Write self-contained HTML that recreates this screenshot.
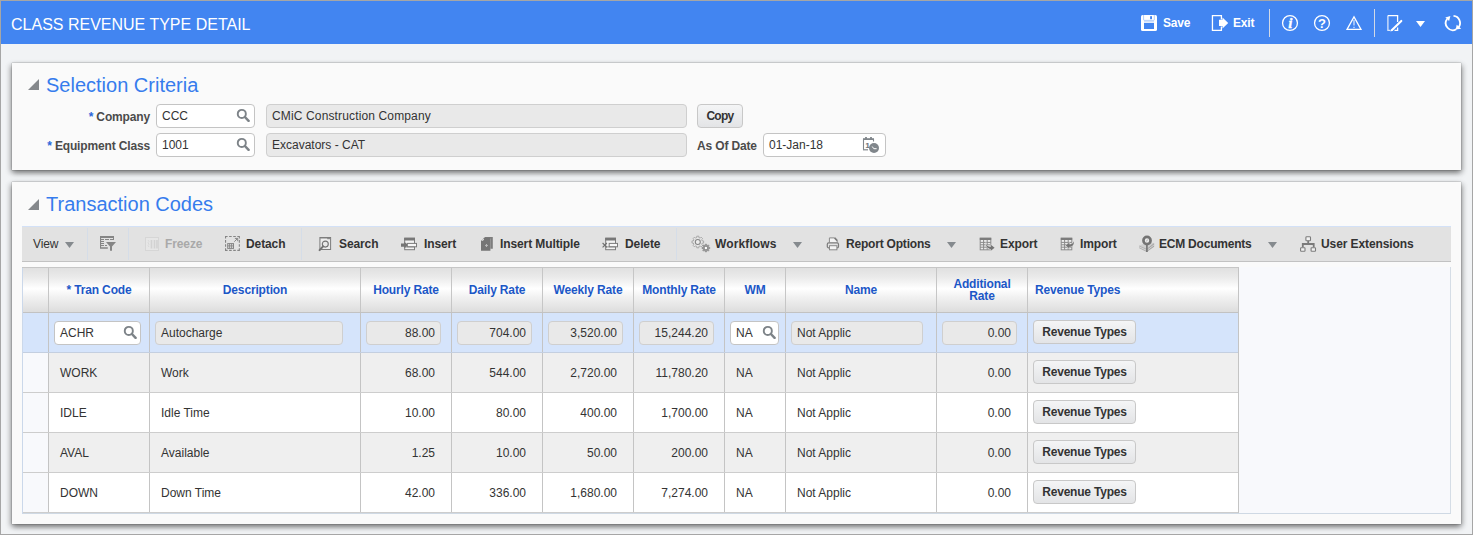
<!DOCTYPE html>
<html><head><meta charset="utf-8"><title>Class Revenue Type Detail</title>
<style>
*{box-sizing:border-box;margin:0;padding:0}
html,body{width:1473px;height:535px;overflow:hidden}
body{position:relative;background:#f1f3f5;font-family:"Liberation Sans",Arial,sans-serif;font-size:12px;color:#333}
.abs{position:absolute}
#frame{position:absolute;left:0;top:0;width:1473px;height:535px;border:1px solid #a6a6a6;z-index:50;pointer-events:none}
#hdr{position:absolute;left:1px;top:1px;width:1471px;height:43px;background:#4285f1}
#hdr .title{position:absolute;left:10px;top:14px;font-size:16px;line-height:20px;color:#fff;white-space:nowrap}
.hb{position:absolute;color:#fff;font-weight:bold;font-size:12px;line-height:14px;white-space:nowrap;letter-spacing:-0.2px}
.vsep{position:absolute;width:1px;background:#d2d9e6;top:8px;height:28px}
.panel{position:absolute;left:12px;width:1449px;background:#fafafa;box-shadow:0 0 1px rgba(0,0,0,.5),0 3px 6px rgba(0,0,0,.34),-2px 2px 5px rgba(0,0,0,.16),2px 2px 5px rgba(0,0,0,.16)}
.ptitle{position:absolute;left:47px;font-size:20px;line-height:24px;color:#367ced;white-space:nowrap}
.tri{position:absolute;left:28px;width:0;height:0;border-left:11px solid transparent;border-bottom:11px solid #85888c}
.lbl{position:absolute;letter-spacing:-0.15px;font-weight:bold;color:#4b4b4b;white-space:nowrap;line-height:14px;text-align:right}
.lbl b{color:#2b66d9}
.inp{position:absolute;height:24px;border:1px solid #c4c4c4;border-radius:4px;background:#fff;line-height:22px;padding-left:5px;white-space:nowrap;color:#333}
.ro{background:#e9e9e9;border-color:#cfcfcf}
.btn{position:absolute;height:24px;border:1px solid #c8c8c8;border-radius:4px;background:linear-gradient(#f4f5f6,#e3e4e6);font-weight:bold;color:#333;line-height:23px;text-align:center;white-space:nowrap;letter-spacing:-0.2px}
.mag{position:absolute;right:4px;top:3px;width:14px;height:14px}
#tb{position:absolute;left:22px;top:226px;width:1429px;height:36px;background:#e2e2e2;border-top:1px solid #d3e1f7;border-bottom:1px solid #c2c2c2}
.ti{position:absolute;top:10px;font-weight:bold;line-height:14px;color:#333;white-space:nowrap;letter-spacing:-0.1px}
.tsep{position:absolute;top:1px;width:1px;height:32px;background:#d5dde8}
.ico{position:absolute}
.dd{position:absolute;width:9px;height:6px;background:#858a8e;clip-path:polygon(0 0,100% 0,50% 100%)}
#tw{position:absolute;left:22px;top:267px;width:1429px;height:247px;background:#f8f9fc;border-right:1px solid #d5dde6;border-bottom:1px solid #cfd9e4}
#grid{position:absolute;left:0;top:0;width:1217px;height:246px;border-top:1px solid #c6c6c6;border-right:1px solid #c4c4c4;border-bottom:1px solid #c9c9c9}
.hrow{position:absolute;left:0;top:0;width:1216px;height:45px;background:linear-gradient(#e0e0e0 0%,#ebebeb 22%,#ffffff 47%,#f1f1f1 66%,#dddddd 100%);border-bottom:1px solid #c2c2c2}
.hc{position:absolute;top:0;height:44px;border-left:1px solid #c6c6c6;color:#1c57c7;font-weight:bold;text-align:center;line-height:12px;display:flex;align-items:center;justify-content:center;letter-spacing:-0.15px}
.row{position:absolute;left:0;width:1216px;height:40px;border-bottom:1px solid #cdcdcd}
.row.sel{background:#d5e4fb;border-bottom-color:#c4cfe0}
.row.odd{background:#efefef}
.row.even{background:#fff}
.rh{position:absolute;left:0;top:0;width:26px;height:39px;background:#f8f9fc}
.row.sel .rh{background:#d5e4fb}
.c{position:absolute;top:0;height:39px;border-left:1px solid #c4c4c4;line-height:41px;white-space:nowrap;color:#333}
.c.l{padding-left:11px}
.c.r{text-align:right;padding-right:16px}
.c .inp{top:8px}
.c .mag{right:3px}
.c .btn{top:7px;left:5px;width:103px}
</style></head><body>
<div id="hdr">
 <div class="title">CLASS REVENUE TYPE DETAIL</div>
 <div class="hb" style="left:1162px;top:15px">Save</div>
 <div class="hb" style="left:1232px;top:15px">Exit</div>

 <svg class="ico" style="left:1140px;top:14px" width="16" height="16" viewBox="0 0 16 16"><rect x="0" y="0" width="16" height="16" rx="1.6" fill="#fff"/><rect x="3" y="8" width="10" height="6" fill="#4285f1"/><rect x="3" y="6" width="10" height="1.6" fill="#cfe0fc"/><path d="M2.6 0V4.5Q2.6 5.4 3.5 5.4H12.4Q13.3 5.4 13.3 4.5V0" stroke="#4285f1" stroke-opacity=".5" stroke-width=".8" fill="none"/><rect x="9.1" y="1.2" width="1.9" height="3" fill="#4285f1"/></svg>
 <svg class="ico" style="left:1210px;top:14px" width="18" height="16" viewBox="0 0 18 16"><path d="M10.4 4.6V0.65H1.45V15.35H10.4V11.4" stroke="#fff" stroke-width="1.3" fill="none"/><path d="M8 4.8H11.5V2.4L17.2 7.9L11.5 13.4V11H8Z" fill="#fff"/></svg>
 <svg class="ico" style="left:1280px;top:13px" width="18" height="18" viewBox="0 0 18 18"><circle cx="9" cy="9" r="7.45" stroke="#fff" stroke-width="1.3" fill="none"/><text x="9.3" y="14" text-anchor="middle" font-family="Liberation Serif,serif" font-style="italic" font-weight="bold" font-size="15" fill="#fff" stroke="#fff" stroke-width=".35">i</text></svg>
 <svg class="ico" style="left:1312px;top:13px" width="18" height="18" viewBox="0 0 18 18"><circle cx="9" cy="9" r="7.45" stroke="#fff" stroke-width="1.3" fill="none"/><text x="9.1" y="13.7" text-anchor="middle" font-family="Liberation Sans,sans-serif" font-weight="bold" font-size="13" fill="#fff">?</text></svg>
 <svg class="ico" style="left:1344px;top:14px" width="18" height="16" viewBox="0 0 18 16"><path d="M9 1.9L16 14.4H2Z" stroke="#fff" stroke-width="1.25" fill="none" stroke-linejoin="miter"/><path d="M9 5V10.6M9 11.8V13" stroke="#fff" stroke-opacity=".75" stroke-width="1.3"/></svg>
 <svg class="ico" style="left:1385px;top:13px" width="18" height="18" viewBox="0 0 18 18"><path d="M11.6 8V1.6H1.9" stroke="#fff" stroke-width="1.3" fill="none"/><path d="M1.9 1.6V16.4H4.5" stroke="#fff" stroke-opacity=".8" stroke-width="1.3" fill="none"/><path d="M8.5 16.4H11.6V13.5" stroke="#fff" stroke-width="1.3" fill="none"/><path d="M15.3 6.9L6 15.9" stroke="#fff" stroke-width="2.1" stroke-linecap="round"/><path d="M4.3 17.4L5.4 15.2L7 16.7Z" fill="#fff"/></svg>
 <svg class="ico" style="left:1415px;top:20px" width="9" height="6" viewBox="0 0 9 6"><path d="M0 0H9L4.5 6Z" fill="#fff"/></svg>
 <svg class="ico" style="left:1443px;top:13px" width="19" height="18" viewBox="0 0 19 18"><path d="M9.5 1.93A7.1 7.1 0 0 1 14.6 13.3" stroke="#fff" stroke-width="1.8" fill="none"/><path d="M12.3 15.25A7.1 7.1 0 0 1 3.1 4.9" stroke="#fff" stroke-width="1.8" fill="none"/><path d="M1.3 3.4L6.4 1.9L5.1 7Z" fill="#fff"/><path d="M12.7 10.8L17.2 14.7L11.7 15.6Z" fill="#fff"/></svg>
 <div class="vsep" style="left:1268px"></div>
 <div class="vsep" style="left:1373px"></div>
</div>

<div class="panel" style="top:63px;height:107px"><div style="position:absolute;left:0;top:-1px;width:100%;height:0">
 <div class="tri" style="top:17px;left:16px"></div>
 <div class="ptitle" style="left:34px;top:11px">Selection Criteria</div>
 <div class="lbl" style="right:1311px;top:48px"><b>*</b> Company</div>
 <div class="lbl" style="right:1311px;top:77px"><b>*</b> Equipment Class</div>
 <div class="inp" style="left:144px;top:42px;width:99px">CCC<svg class="mag" width="14" height="14" viewBox="0 0 14 14"><circle cx="5.8" cy="5.9" r="4.05" fill="none" stroke="#7d8388" stroke-width="1.9"/><path d="M8.9 9L12.6 12.8" stroke="#7d8388" stroke-width="2.5" stroke-linecap="round"/></svg></div>
 <div class="inp" style="left:144px;top:71px;width:99px">1001<svg class="mag" width="14" height="14" viewBox="0 0 14 14"><circle cx="5.8" cy="5.9" r="4.05" fill="none" stroke="#7d8388" stroke-width="1.9"/><path d="M8.9 9L12.6 12.8" stroke="#7d8388" stroke-width="2.5" stroke-linecap="round"/></svg></div>
 <div class="inp ro" style="left:254px;top:42px;width:421px;letter-spacing:.14px">CMiC Construction Company</div>
 <div class="inp ro" style="left:254px;top:71px;width:421px">Excavators - CAT</div>
 <div class="btn" style="left:685px;top:42px;width:46px;letter-spacing:-0.7px">Copy</div>
 <div class="lbl" style="left:685px;top:77px">As Of Date</div>
 <div class="inp" style="left:751px;top:71px;width:123px">01-Jan-18<svg class="ico" style="right:5px;top:3px" width="18" height="18" viewBox="0 0.5 18 18"><path d="M1.5 13.2V3H11.5V5" stroke="#80868b" stroke-width="1.1" fill="none"/><path d="M1 2.6H12" stroke="#80868b" stroke-width="1.8"/><path d="M4 .6V3M9 .6V3" stroke="#80868b" stroke-width="1.8"/><path d="M1 13.3H6" stroke="#80868b" stroke-width="1.2"/><text x="3.4" y="11.2" font-family="Liberation Sans,sans-serif" font-size="7.5" font-weight="bold" fill="#6f757a" stroke="#6f757a" stroke-width=".2">1</text><circle cx="12" cy="11.5" r="5" fill="#80868b"/><path d="M10.2 10L11.8 12.2H14.6" stroke="#fff" stroke-width="1" fill="none"/></svg></div>
</div></div>

<div class="panel" style="top:182px;height:342px">
 <div class="tri" style="top:17px;left:16px"></div>
 <div class="ptitle" style="left:34px;top:10px">Transaction Codes</div>
</div>

<div id="tb">
 <svg class="ico" style="left:78px;top:9px" width="17" height="15" viewBox="0 0 17 15"><path d="M0 0H14V3.6H13V2H1.1V11.3H7.8V12.8H0Z" fill="#858585"/><path d="M1 3.5H4M5 3.5H9M10 3.5H14M1 5.5H4M1 7.5H4M1 9.5H4M5 9.5H7" stroke="#858585" stroke-width="1"/><path d="M6 6.1H16L12 10.6V14.7H10V10.6Z" fill="#858585"/></svg>
 <svg class="ico" style="left:123px;top:10px" width="14" height="14" viewBox="0 0 14 14"><rect x=".5" y=".5" width="13" height="13" fill="#e6e6e6" stroke="#d6d6d6"/><path d="M6.5 3V11.5M9.5 3V11.5M12 3V11.5" stroke="#d2d2d2" stroke-width="1.6"/><path d="M3 3l1 1.4l-1 1.4l1 1.4l-1 1.4l1 1.4" stroke="#d6d6d6" stroke-width=".8" fill="none"/></svg>
 <svg class="ico" style="left:203px;top:9px" width="15" height="15" viewBox="0 0 15 15"><path d="M0 .55H14.9M0 14.35H14.9M.55 0V14.9M14.35 0V14.9" fill="none" stroke="#858585" stroke-width="1.1" stroke-dasharray="2.6 1.5"/><rect x="2.7" y="7.6" width="5.8" height="4.8" fill="none" stroke="#858585" stroke-width="1"/><path d="M4.6 7.6V12.4M6.6 7.6V12.4M2.7 9.9H8.5" stroke="#858585" stroke-width=".9"/><path d="M9.3 5.7L12.4 2.6M9.9 2.4H12.7V5.2" stroke="#858585" stroke-width="1" fill="none"/></svg>
 <svg class="ico" style="left:296px;top:9px" width="15" height="16" viewBox="0 0 15 16"><rect x="1.9" y="1.5" width="10.7" height="12" fill="#ececec" stroke="#7c7c7c" stroke-width="1"/><path d="M2.4 2.5H12.2" stroke="#8a8a8a" stroke-width="1.4"/><path d="M3 3.1H9.2" stroke="#fff" stroke-width="1"/><circle cx="7.3" cy="8.1" r="3" fill="#e9e9e9" stroke="#747474" stroke-width="1.1"/><path d="M5.1 10.4L1.6 14.1" stroke="#747474" stroke-width="2.1" stroke-linecap="round"/></svg>
 <svg class="ico" style="left:378px;top:10px" width="18" height="14" viewBox="0 0 18 14"><rect x="4.7" y="1.3" width="9.8" height="11.4" fill="#f2f2f2" stroke="#7c7c7c" stroke-width="1"/><rect x="4.2" y=".7" width="10.8" height="2.8" fill="#787878"/><rect x="7.2" y="6.4" width="9.3" height="3.4" fill="#f6f6f6" stroke="#7c7c7c" stroke-width="1"/><path d="M4.7 9.9H14.5" stroke="#7c7c7c" stroke-width=".8"/><path d="M1 6.4H4.3V4.8L8 8.1L4.3 11.4V9.8H1Z" fill="#757575"/></svg>
 <svg class="ico" style="left:458px;top:9px" width="14" height="16" viewBox="0 0 14 16"><path d="M5 1H12.8V12.8H10.4V2.4H4Z" fill="#7d7d7d"/><path d="M4 1.8H10.4V14.8H1V5Z" fill="#757575"/><path d="M1.8 4.3L3.4 2.6L4 3.6L2.8 4.9Z" fill="#e8e8e8"/><path d="M6.5 8.1V10.9M5.1 9.5H7.9" stroke="#b9b9b9" stroke-width="1.1"/></svg>
 <svg class="ico" style="left:579px;top:10px" width="18" height="14" viewBox="0 0 18 14"><rect x="4.7" y="1.3" width="9.8" height="11.4" fill="#f2f2f2" stroke="#7c7c7c" stroke-width="1"/><rect x="4.2" y=".7" width="10.8" height="2.8" fill="#787878"/><rect x="8.2" y="6.4" width="8.3" height="3.4" fill="#f6f6f6" stroke="#7c7c7c" stroke-width="1"/><path d="M4.7 9.9H14.5" stroke="#7c7c7c" stroke-width=".8"/><path d="M1.6 6L5.9 10.3M5.9 6L1.6 10.3" stroke="#707070" stroke-width="1.1"/></svg>
 <svg class="ico" style="left:668px;top:8px" width="21" height="18" viewBox="0 0 21 18"><path d="M13.61 5.96L13.61 8.04L12.29 8.02L11.69 9.45L12.64 10.37L11.17 11.84L10.25 10.89L8.82 11.49L8.84 12.81L6.76 12.81L6.78 11.49L5.35 10.89L4.43 11.84L2.96 10.37L3.91 9.45L3.31 8.02L1.99 8.04L1.99 5.96L3.31 5.98L3.91 4.55L2.96 3.63L4.43 2.16L5.35 3.11L6.78 2.51L6.76 1.19L8.84 1.19L8.82 2.51L10.25 3.11L11.17 2.16L12.64 3.63L11.69 4.55L12.29 5.98Z" fill="#e6e6e6" stroke="#a3a3a3" stroke-width=".9" stroke-linejoin="round"/><circle cx="7.8" cy="7" r="2.5" fill="#ececec" stroke="#858585" stroke-width="1.1"/><path d="M19.74 12.31L19.74 13.69L18.73 13.64L18.35 14.54L19.10 15.23L18.13 16.20L17.44 15.45L16.54 15.83L16.59 16.84L15.21 16.84L15.26 15.83L14.36 15.45L13.67 16.20L12.70 15.23L13.45 14.54L13.07 13.64L12.06 13.69L12.06 12.31L13.07 12.36L13.45 11.46L12.70 10.77L13.67 9.80L14.36 10.55L15.26 10.17L15.21 9.16L16.59 9.16L16.54 10.17L17.44 10.55L18.13 9.80L19.10 10.77L18.35 11.46L18.73 12.36Z" fill="#9a9a9a" stroke="#8a8a8a" stroke-width=".7" stroke-linejoin="round"/><circle cx="15.9" cy="13" r="2.2" fill="#8d8d8d"/><circle cx="15.9" cy="13" r="1.2" fill="#fff"/></svg>
 <svg class="ico" style="left:804px;top:10px" width="14" height="14" viewBox="0 0 14 14"><path d="M3.4 5.6V.9H8.6L11.2 3.6V5.6" fill="#f4f4f4" stroke="#8a8a8a" stroke-width="1"/><path d="M8.6 .9L11.2 3.6" stroke="#7c7c7c" stroke-width="1.6"/><rect x="1.3" y="5.8" width="11.2" height="5" rx="1.4" fill="#e2e2e2" stroke="#7c7c7c" stroke-width="1.2"/><rect x="3.5" y="8.7" width="7.4" height="4.1" fill="#f4f4f4" stroke="#8a8a8a" stroke-width="1"/></svg>
 <svg class="ico" style="left:957px;top:10px" width="16" height="14" viewBox="0 0 16 14"><rect x="1.2" y="1.2" width="10.6" height="11.6" fill="#ebebeb" stroke="#8a8a8a" stroke-width="1"/><rect x=".8" y=".8" width="11.4" height="2.2" fill="#7c7c7c"/><path d="M4.6 3V12.8M8.2 3V12.8M1.2 5.4H11.8M1.2 7.8H11.8M1.2 10.2H11.8" stroke="#8a8a8a" stroke-width="1"/><path d="M6.9 5.6C7.2 8.6 9 10 11.8 9.9V7.7L15.6 10.7L11.8 13.7V11.9C8.6 12 6.9 9.6 6.9 5.6Z" fill="#747474" stroke="#e2e2e2" stroke-width=".9" paint-order="stroke"/></svg>
 <svg class="ico" style="left:1038px;top:10px" width="15" height="14" viewBox="0 0 15 14"><rect x="1.2" y="1.2" width="10.6" height="11.6" fill="#ebebeb" stroke="#8a8a8a" stroke-width="1"/><rect x=".8" y=".8" width="11.4" height="2.2" fill="#7c7c7c"/><path d="M4.6 3V12.8M8.2 3V12.8M1.2 5.4H11.8M1.2 7.8H11.8M1.2 10.2H11.8" stroke="#8a8a8a" stroke-width="1"/><path d="M13.9 4.2C14.2 8 12 9.8 9.4 9.8V11.6L5.8 8.6L9.4 5.6V7.4C11.4 7.4 13 6.6 13.9 4.2Z" fill="#747474" stroke="#e2e2e2" stroke-width=".9" paint-order="stroke"/></svg>
 <svg class="ico" style="left:1116px;top:8px" width="17" height="18" viewBox="0 0 17 18"><path d="M1.2 10.4L8.8 7.4L16.1 8.1L8.8 13.8Z" fill="#cfcfcf"/><path d="M1.2 10.4L8.8 13.8V17L1.2 13.3Z" fill="#b0b0b0"/><path d="M8.8 13.8L16.1 8.1V11.7L8.8 17Z" fill="#a6a6a6"/><path d="M1.2 11.9L8.8 15.4L16.1 9.9" stroke="#dedede" stroke-width=".8" fill="none"/><path d="M8.9 9V16.9" stroke="#767676" stroke-width="1.7"/><circle cx="9" cy="5.5" r="3.55" fill="#ededed" stroke="#747474" stroke-width="2.7"/><path d="M8.2 6.2L9.8 4.8" stroke="#9a9a9a" stroke-width=".8"/></svg>
 <svg class="ico" style="left:1277px;top:8px" width="18" height="18" viewBox="0 0 18 18"><rect x="6.9" y="1.8" width="4.6" height="3.9" rx=".8" fill="#f2f2f2" stroke="#7c7c7c" stroke-width="1.1"/><path d="M9.2 5.8V9M3.8 12.2V9H14.7V12.2" stroke="#7a7a7a" stroke-width="1.8" fill="none"/><rect x="1.6" y="12.7" width="4.4" height="3.6" rx=".6" fill="#f2f2f2" stroke="#7c7c7c" stroke-width="1.1"/><rect x="12.1" y="12.7" width="4.4" height="3.6" rx=".6" fill="#f2f2f2" stroke="#7c7c7c" stroke-width="1.1"/></svg>
 <div class="ti" style="left:11px;font-weight:normal">View</div>
 <div class="dd" style="left:43px;top:15px"></div>
 <div class="tsep" style="left:65px"></div>
 <div class="tsep" style="left:106px"></div>
 <div class="ti" style="left:143px;color:#a9a9a9">Freeze</div>
 <div class="ti" style="left:224px">Detach</div>
 <div class="tsep" style="left:279px"></div>
 <div class="ti" style="left:317px">Search</div>
 <div class="ti" style="left:402px">Insert</div>
 <div class="ti" style="left:478px">Insert Multiple</div>
 <div class="ti" style="left:603px">Delete</div>
 <div class="tsep" style="left:654px"></div>
 <div class="ti" style="left:693px;letter-spacing:.12px">Workflows</div>
 <div class="dd" style="left:771px;top:15px"></div>
 <div class="ti" style="left:824px;letter-spacing:-0.2px">Report Options</div>
 <div class="dd" style="left:925px;top:15px"></div>
 <div class="ti" style="left:978px">Export</div>
 <div class="ti" style="left:1058px">Import</div>
 <div class="ti" style="left:1137px;letter-spacing:-0.22px">ECM Documents</div>
 <div class="dd" style="left:1246px;top:15px"></div>
 <div class="ti" style="left:1299px">User Extensions</div>
</div>

<div id="tw"><div id="grid">
 <div class="hrow">
  <div class="hc" style="left:26px;width:101px"><span>* Tran Code</span></div>
  <div class="hc" style="left:127px;width:211px">Description</div>
  <div class="hc" style="left:338px;width:91px">Hourly Rate</div>
  <div class="hc" style="left:429px;width:91px">Daily Rate</div>
  <div class="hc" style="left:520px;width:91px">Weekly Rate</div>
  <div class="hc" style="left:611px;width:91px">Monthly Rate</div>
  <div class="hc" style="left:702px;width:61px">WM</div>
  <div class="hc" style="left:763px;width:151px">Name</div>
  <div class="hc" style="left:914px;width:91px">Additional<br>Rate</div>
  <div class="hc" style="left:1005px;width:211px;justify-content:flex-start;padding-left:7px">Revenue Types</div>
 </div>

 <div class="row sel" style="top:45px"><div class="rh"></div>
  <div class="c" style="left:26px;width:101px"><div class="inp" style="left:5px;width:87px">ACHR<svg class="mag" width="14" height="14" viewBox="0 0 14 14"><circle cx="5.8" cy="5.9" r="4.05" fill="none" stroke="#7d8388" stroke-width="1.9"/><path d="M8.9 9L12.6 12.8" stroke="#7d8388" stroke-width="2.5" stroke-linecap="round"/></svg></div></div>
  <div class="c" style="left:127px;width:211px"><div class="inp ro" style="left:5px;width:188px">Autocharge</div></div>
  <div class="c" style="left:338px;width:91px"><div class="inp ro" style="left:5px;width:75px;text-align:right;padding-right:5px">88.00</div></div>
  <div class="c" style="left:429px;width:91px"><div class="inp ro" style="left:5px;width:75px;text-align:right;padding-right:5px">704.00</div></div>
  <div class="c" style="left:520px;width:91px"><div class="inp ro" style="left:5px;width:75px;text-align:right;padding-right:5px">3,520.00</div></div>
  <div class="c" style="left:611px;width:91px"><div class="inp ro" style="left:5px;width:75px;text-align:right;padding-right:5px">15,244.20</div></div>
  <div class="c" style="left:702px;width:61px"><div class="inp" style="left:5px;width:49px">NA<svg class="mag" style="right:2px" width="14" height="14" viewBox="0 0 14 14"><circle cx="5.8" cy="5.9" r="4.05" fill="none" stroke="#7d8388" stroke-width="1.9"/><path d="M8.9 9L12.6 12.8" stroke="#7d8388" stroke-width="2.5" stroke-linecap="round"/></svg></div></div>
  <div class="c" style="left:763px;width:151px"><div class="inp ro" style="left:5px;width:132px">Not Applic</div></div>
  <div class="c" style="left:914px;width:91px"><div class="inp ro" style="left:5px;width:75px;text-align:right;padding-right:5px">0.00</div></div>
  <div class="c" style="left:1005px;width:211px"><div class="btn">Revenue Types</div></div>
 </div>

 <div class="row odd" style="top:85px"><div class="rh"></div>
  <div class="c l" style="left:26px;width:101px">WORK</div>
  <div class="c l" style="left:127px;width:211px">Work</div>
  <div class="c r" style="left:338px;width:91px">68.00</div>
  <div class="c r" style="left:429px;width:91px">544.00</div>
  <div class="c r" style="left:520px;width:91px">2,720.00</div>
  <div class="c r" style="left:611px;width:91px">11,780.20</div>
  <div class="c l" style="left:702px;width:61px">NA</div>
  <div class="c l" style="left:763px;width:151px">Not Applic</div>
  <div class="c r" style="left:914px;width:91px">0.00</div>
  <div class="c" style="left:1005px;width:211px"><div class="btn">Revenue Types</div></div>
 </div>

 <div class="row even" style="top:125px"><div class="rh"></div>
  <div class="c l" style="left:26px;width:101px">IDLE</div>
  <div class="c l" style="left:127px;width:211px">Idle Time</div>
  <div class="c r" style="left:338px;width:91px">10.00</div>
  <div class="c r" style="left:429px;width:91px">80.00</div>
  <div class="c r" style="left:520px;width:91px">400.00</div>
  <div class="c r" style="left:611px;width:91px">1,700.00</div>
  <div class="c l" style="left:702px;width:61px">NA</div>
  <div class="c l" style="left:763px;width:151px">Not Applic</div>
  <div class="c r" style="left:914px;width:91px">0.00</div>
  <div class="c" style="left:1005px;width:211px"><div class="btn">Revenue Types</div></div>
 </div>

 <div class="row odd" style="top:165px"><div class="rh"></div>
  <div class="c l" style="left:26px;width:101px">AVAL</div>
  <div class="c l" style="left:127px;width:211px">Available</div>
  <div class="c r" style="left:338px;width:91px">1.25</div>
  <div class="c r" style="left:429px;width:91px">10.00</div>
  <div class="c r" style="left:520px;width:91px">50.00</div>
  <div class="c r" style="left:611px;width:91px">200.00</div>
  <div class="c l" style="left:702px;width:61px">NA</div>
  <div class="c l" style="left:763px;width:151px">Not Applic</div>
  <div class="c r" style="left:914px;width:91px">0.00</div>
  <div class="c" style="left:1005px;width:211px"><div class="btn">Revenue Types</div></div>
 </div>

 <div class="row even" style="top:205px"><div class="rh"></div>
  <div class="c l" style="left:26px;width:101px">DOWN</div>
  <div class="c l" style="left:127px;width:211px">Down Time</div>
  <div class="c r" style="left:338px;width:91px">42.00</div>
  <div class="c r" style="left:429px;width:91px">336.00</div>
  <div class="c r" style="left:520px;width:91px">1,680.00</div>
  <div class="c r" style="left:611px;width:91px">7,274.00</div>
  <div class="c l" style="left:702px;width:61px">NA</div>
  <div class="c l" style="left:763px;width:151px">Not Applic</div>
  <div class="c r" style="left:914px;width:91px">0.00</div>
  <div class="c" style="left:1005px;width:211px"><div class="btn">Revenue Types</div></div>
 </div>
<div style="position:absolute;left:0;top:0;width:1px;height:246px;background:#cbd8ea"></div>
</div></div>

<div id="frame"></div>
</body></html>
